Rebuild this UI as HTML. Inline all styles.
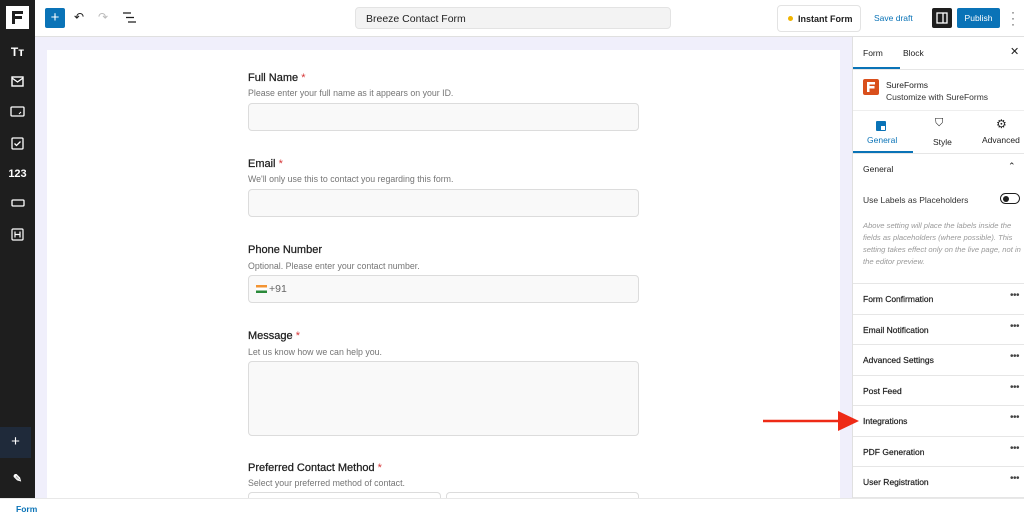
<!DOCTYPE html>
<html><head><style>
*{box-sizing:border-box;margin:0;padding:0}
body{width:1024px;height:515px;overflow:hidden;font-family:"Liberation Sans",sans-serif;background:#fff;position:relative;color:#1e1e1e}
.abs{position:absolute}
#left{left:0;top:0;width:35px;height:498px;background:#1e1e1e}
#left .ic{position:absolute;left:0;width:35px;text-align:center;color:#fff;font-size:11px;font-weight:bold}
#top{left:35px;top:0;width:989px;height:37px;background:#fff;border-bottom:1px solid #e0e0e0}
#canvas{left:35px;top:37px;width:818px;height:461px;background:#f0effb}
#card{left:47px;top:50px;width:793px;height:448px;background:#fff}
.lbl{position:absolute;left:248px;font-size:11px;color:#1e1e1e;-webkit-text-stroke:0.25px #1e1e1e}
.lbl b{color:#d63638;font-weight:normal;-webkit-text-stroke:0}
.help{position:absolute;left:248px;font-size:8.8px;color:#757575}
.inp{position:absolute;left:248px;width:391px;background:#f9f9f9;border:1px solid #dcdcdc;border-radius:4px}
#side{left:852px;top:37px;width:172px;height:461px;background:#fff;border-left:1px solid #e0e0e0}
.row{position:absolute;left:0;width:172px;height:30.5px;border-top:1px solid #e6e6e6;font-size:8.5px;padding:10px 0 0 10px;color:#1e1e1e;-webkit-text-stroke:0.2px #1e1e1e}
.row span{position:absolute;right:6px;top:6px;font-size:10px;letter-spacing:-0.5px;color:#444;-webkit-text-stroke:0}
#bottom{left:0;top:498px;width:1024px;height:17px;background:#fff;border-top:1px solid #e8e8e8}
</style></head><body>
<div id="left" class="abs">
 <div class="abs" style="left:6px;top:6px;width:23px;height:23px;background:#fff;"><svg width="23" height="23"><path d="M6 5h11v3H9v2h7v3H9v5H6z" fill="#1e1e1e"/></svg></div>
 <div class="ic" style="top:45px;font-size:12px">Tт</div>
 <div class="ic" style="top:76px"><svg width="13" height="11"><rect x="1" y="1" width="11" height="9" fill="none" stroke="#fff" stroke-width="1.4"/><path d="M1 2l5.5 4L12 2" fill="none" stroke="#fff" stroke-width="1.3"/></svg></div>
 <div class="ic" style="top:106px"><svg width="15" height="11"><rect x="1" y="1" width="13" height="9" rx="1" fill="none" stroke="#fff" stroke-width="1.3"/><path d="M11 6l-2 2" stroke="#fff"/></svg></div>
 <div class="ic" style="top:137px"><svg width="13" height="13"><rect x="1" y="1" width="11" height="11" rx="1" fill="none" stroke="#fff" stroke-width="1.3"/><path d="M3.5 6.5l2 2 4-4" fill="none" stroke="#fff" stroke-width="1.3"/></svg></div>
 <div class="ic" style="top:168px;font-size:11px">123</div>
 <div class="ic" style="top:199px"><svg width="14" height="10"><rect x="1" y="1" width="12" height="6" rx="1" fill="none" stroke="#fff" stroke-width="1.3"/></svg></div>
 <div class="ic" style="top:228px"><svg width="13" height="13"><rect x="1" y="1" width="11" height="11" rx="1" fill="none" stroke="#fff" stroke-width="1.2"/><path d="M4 3.5v6M9 3.5v6M4 6.5h5" stroke="#fff" stroke-width="1.2"/></svg></div>
 <div class="abs" style="left:0;top:427px;width:31px;height:31px;background:#1f2a3a;color:#fff;text-align:center;font-size:15px;line-height:30px">+</div>
 <div class="ic" style="top:472px;font-size:11px">✎</div>
</div>
<div id="top" class="abs">
 <div class="abs" style="left:10px;top:8px;width:20px;height:20px;background:#0a73b7;border-radius:2px;color:#fff;font-size:15px;line-height:19px;text-align:center">+</div>
 <div class="abs" style="left:39px;top:10px;font-size:12px;color:#1e1e1e">↶</div>
 <div class="abs" style="left:63px;top:10px;font-size:12px;color:#bbb">↷</div>
 <svg class="abs" style="left:88px;top:12px" width="13" height="11"><path d="M0 1h8M3 5.5h8M5 10h8" stroke="#1e1e1e" stroke-width="1.3"/></svg>
 <div class="abs" style="left:320px;top:7px;width:316px;height:22px;background:#f3f3f3;border-radius:4px;border:1px solid #e3e3e3;font-size:10.5px;padding:5px 0 0 10px">Breeze Contact Form</div>
 <div class="abs" style="left:742px;top:5px;width:84px;height:27px;border:1px solid #e3e3e3;border-radius:4px;font-size:9px;font-weight:bold;padding:8px 0 0 10px;color:#1e1e1e"><span style="display:inline-block;width:5px;height:5px;border-radius:50%;background:#f0b400;margin-right:5px;vertical-align:1px"></span>Instant Form</div>
 <div class="abs" style="left:839px;top:13px;font-size:8.5px;color:#0a73b7">Save draft</div>
 <div class="abs" style="left:897px;top:8px;width:20px;height:20px;background:#1e1e1e;border-radius:2px"><svg width="20" height="20"><rect x="5" y="5" width="10" height="10" fill="none" stroke="#fff" stroke-width="1.3"/><path d="M11 5v10" stroke="#fff" stroke-width="1.3"/></svg></div>
 <div class="abs" style="left:922px;top:8px;width:43px;height:20px;background:#0a73b7;border-radius:2px;color:#fff;font-size:8.5px;text-align:center;line-height:20px">Publish</div>
 <div class="abs" style="left:976px;top:9px;font-size:12px;line-height:6px;color:#444">·<br>·<br>·</div>
</div>
<div id="canvas" class="abs"></div>
<div id="card" class="abs"></div>
<div class="lbl" style="top:72px">Full Name <b>*</b></div>
<div class="help" style="top:88px">Please enter your full name as it appears on your ID.</div>
<div class="inp" style="top:103px;height:28px"></div>
<div class="lbl" style="top:158px">Email <b>*</b></div>
<div class="help" style="top:174px">We'll only use this to contact you regarding this form.</div>
<div class="inp" style="top:189px;height:28px"></div>
<div class="lbl" style="top:244px">Phone Number</div>
<div class="help" style="top:261px">Optional. Please enter your contact number.</div>
<div class="inp" style="top:275px;height:28px;font-size:10.5px;color:#666;padding:7px 0 0 7px"><span style="display:inline-block;width:11px;height:8px;background:linear-gradient(#f39433 33%,#fff 33% 66%,#2a8a3a 66%);vertical-align:-1px;margin-right:2px"></span>+91</div>
<div class="lbl" style="top:330px">Message <b>*</b></div>
<div class="help" style="top:347px">Let us know how we can help you.</div>
<div class="inp" style="top:361px;height:75px"></div>
<div class="lbl" style="top:462px">Preferred Contact Method <b>*</b></div>
<div class="help" style="top:478px">Select your preferred method of contact.</div>
<div class="inp" style="top:492px;height:10px;width:193px;background:#fff"></div>
<div class="inp" style="top:492px;height:10px;left:446px;width:193px;background:#fff"></div>
<div id="side" class="abs">
 <div class="abs" style="left:10px;top:11px;font-size:8.5px">Form</div>
 <div class="abs" style="left:50px;top:11px;font-size:8.5px">Block</div>
 <div class="abs" style="left:157px;top:8px;font-size:11px">✕</div>
 <div class="abs" style="left:0;top:30px;width:47px;height:2px;background:#0a73b7"></div>
 <div class="abs" style="left:0;top:32px;width:172px;height:1px;background:#e6e6e6"></div>
 <div class="abs" style="left:10px;top:42px;width:16px;height:16px;background:#d94f1c;border-radius:2px"><svg width="16" height="16"><path d="M4 3h8v2.5H6.5v1.5h5v2.5h-5v3.5H4z" fill="#fff"/></svg></div>
 <div class="abs" style="left:33px;top:43px;font-size:8.5px">SureForms</div>
 <div class="abs" style="left:33px;top:55px;font-size:8.5px;color:#333">Customize with SureForms</div>
 <div class="abs" style="left:0;top:73px;width:172px;height:1px;background:#eee"></div>
 <div class="abs" style="left:23px;top:84px;width:10px;height:10px;background:#0a73b7;border-radius:1px"><div style="position:absolute;right:1.5px;bottom:1.5px;width:4px;height:4px;background:#fff"></div></div>
 <div class="abs" style="left:14px;top:98px;font-size:8.5px;color:#0a73b7">General</div>
 <div class="abs" style="left:82px;top:80px;font-size:11px">⛉</div>
 <div class="abs" style="left:80px;top:100px;font-size:8.5px">Style</div>
 <div class="abs" style="left:143px;top:80px;font-size:12px">⚙</div>
 <div class="abs" style="left:129px;top:98px;font-size:8.5px">Advanced</div>
 <div class="abs" style="left:0;top:114px;width:60px;height:2px;background:#0a73b7"></div>
 <div class="abs" style="left:0;top:116px;width:172px;height:1px;background:#e6e6e6"></div>
 <div class="abs" style="left:10px;top:127px;font-size:8.5px">General</div>
 <div class="abs" style="left:155px;top:124px;font-size:9px">⌃</div>
 <div class="abs" style="left:10px;top:158px;font-size:8.5px;color:#333">Use Labels as Placeholders</div>
 <div class="abs" style="left:147px;top:156px;width:20px;height:11px;border:1px solid #1e1e1e;border-radius:6px"><div style="position:absolute;left:1.5px;top:1.5px;width:6px;height:6px;border-radius:50%;background:#1e1e1e"></div></div>
 <div class="abs" style="left:10px;top:183px;width:162px;font-size:7.6px;line-height:12px;color:#999;font-style:italic">Above setting will place the labels inside the fields as placeholders (where possible). This setting takes effect only on the live page, not in the editor preview.</div>
 <div class="row" style="top:246px">Form Confirmation<span>•••</span></div>
 <div class="row" style="top:277px">Email Notification<span>•••</span></div>
 <div class="row" style="top:307px">Advanced Settings<span>•••</span></div>
 <div class="row" style="top:338px">Post Feed<span>•••</span></div>
 <div class="row" style="top:368px">Integrations<span>•••</span></div>
 <div class="row" style="top:399px">PDF Generation<span>•••</span></div>
 <div class="row" style="top:429px">User Registration<span>•••</span></div>
 <div class="row" style="top:460px"></div>
</div>
<svg class="abs" style="left:760px;top:408px" width="100" height="26"><path d="M3 13H80" stroke="#ee2a16" stroke-width="2.5"/><path d="M78 3L99 13 78 23z" fill="#ee2a16"/></svg>
<div id="bottom" class="abs"><div class="abs" style="left:16px;top:5px;font-size:8.5px;color:#0a73b7;font-weight:bold">Form</div></div>
</body></html>
